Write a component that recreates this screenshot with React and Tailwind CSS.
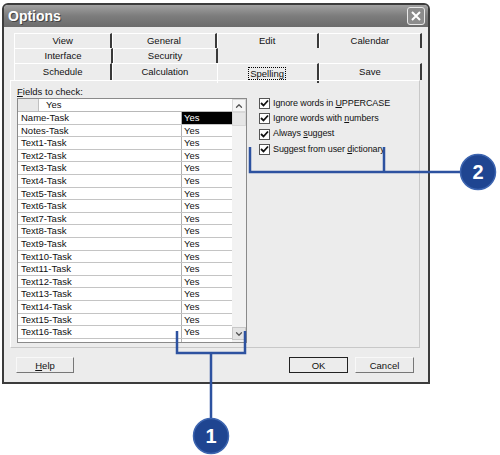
import { ChevronUp, ChevronDown } from 'lucide-react';

const rows = ['Name-Task', 'Notes-Task'].concat(
  Array.from({ length: 16 }, (_, i) => `Text${i + 1}-Task`)
);

const options = [
  { pre: 'Ignore words in ', key: 'U', post: 'PPERCASE' },
  { pre: 'Ignore words with ', key: 'n', post: 'umbers' },
  { pre: 'Always ', key: 's', post: 'uggest' },
  { pre: 'Suggest from user ', key: 'd', post: 'ictionary' },
];

function Tab({ label, w, last }) {
  return (
    <div
      className={`flex items-center justify-center border-t border-l border-t-white border-l-white ${
        last ? '' : 'border-r-2 border-r-[#3a3a3a]'
      } ${w}`}
    >
      {label}
    </div>
  );
}

function Check({ opt }) {
  return (
    <div className="flex h-[15.3px] items-center gap-[3px] whitespace-nowrap text-[9px] tracking-[-0.1px]">
      <div className="flex h-[11px] w-[11px] shrink-0 items-center justify-center border border-[#555] bg-white">
        <svg width="9" height="9" viewBox="0 0 9 9">
          <path d="M1 4 L3.5 6.5 L8 1.5" stroke="#111" strokeWidth="1.8" fill="none" />
        </svg>
      </div>
      <span>
        {opt.pre}
        <u>{opt.key}</u>
        {opt.post}
      </span>
    </div>
  );
}

export default function App() {
  return (
    <div className="relative h-[455px] w-[500px] overflow-hidden bg-white font-['Liberation_Sans',Arial,sans-serif] text-[9.5px] text-[#111]">
      <div className="pl-[2px] pt-[3px]">
        <div className="flex h-[381px] w-[428px] flex-col rounded-t-[6px] border-2 border-[#3c3c3c] bg-[#ececec]">
          {/* title bar */}
          <div className="flex h-[22px] items-center justify-between rounded-t-[4px] bg-gradient-to-b from-[#a2a2a2] via-[#7c7c7c] to-[#6c6c6c] pl-[4px] pr-[3px]">
            <span className="text-[14px] font-bold text-white [text-shadow:1px_1px_0_#444]">Options</span>
            <div className="flex h-[18px] w-[18px] items-center justify-center rounded-[3px] border border-[#e8e8e8] bg-[#8c8c8c]">
              <svg width="10" height="10" viewBox="0 0 10 10">
                <path d="M1 1 L9 9 M9 1 L1 9" stroke="white" strokeWidth="2" />
              </svg>
            </div>
          </div>

          {/* body */}
          <div className="flex flex-1 flex-col px-[6px] pt-[6px]">
            {/* tabs */}
            <div className="ml-[4px] flex flex-col">
              <div className="flex h-[15px]">
                <Tab label="View" w="w-[99px]" />
                <Tab label="General" w="w-[105px]" />
                <Tab label="Edit" w="w-[103px]" />
                <Tab label="Calendar" w="w-[104px]" />
              </div>
              <div className="flex h-[15px]">
                <Tab label="Interface" w="w-[99px]" />
                <Tab label="Security" w="w-[105px]" />
              </div>
              <div className="flex h-[17px]">
                <Tab label="Schedule" w="w-[99px]" />
                <Tab label="Calculation" w="w-[105px]" last />
                <div className="-mb-[3px] flex w-[103px] items-center justify-center border-t border-l border-t-white border-l-white border-r-2 border-r-[#3a3a3a] bg-[#ececec]">
                  <span className="border border-dotted border-black px-[1px] leading-[11px]">Spelling</span>
                </div>
                <Tab label="Save" w="w-[104px]" />
              </div>
            </div>

            {/* panel */}
            <div className="flex h-[268px] w-[410px] flex-col border-t border-l border-t-white border-l-white border-r border-r-[#c8c8c8] border-b border-b-[#c8c8c8] pl-[6px] pt-[5px]">
              <div className="h-[12px] leading-[12px]">
                <u>F</u>ields to check:
              </div>
              <div className="flex gap-[12px]">
                {/* grid */}
                <div className="flex h-[245px] w-[230px] border border-[#8a8a8a] bg-white">
                  <div className="flex w-[214px] flex-col overflow-hidden">
                    <div className="flex h-[13px] shrink-0 items-center border-b border-[#b8b8b8]">
                      <div className="h-full w-[21px] border-r border-[#c0c0c0] bg-[#e8e8e8]" />
                      <span className="pl-[7px]">Yes</span>
                    </div>
                    {rows.map((r, i) => (
                      <div key={r} className="flex h-[12.6px] shrink-0 border-b border-[#c4c4c4] leading-[11.5px]">
                        <div className="w-[164px] border-r border-[#b0b0b0] pl-[3px]">{r}</div>
                        <div className={`flex-1 pl-[2px] ${i === 0 ? 'bg-black text-white' : ''}`}>Yes</div>
                      </div>
                    ))}
                    <div className="flex h-[4px] shrink-0">
                      <div className="w-[164px] border-r border-[#b0b0b0]" />
                    </div>
                  </div>
                  {/* scrollbar */}
                  <div className="flex w-[14px] flex-col bg-[#f2f2f2]">
                    <div className="flex h-[13px] items-center justify-center border border-[#d8d8d8] bg-[#f6f6f6]">
                      <ChevronUp size={10} strokeWidth={3} className="text-[#555]" />
                    </div>
                    <div className="h-[14px] border border-[#d8d8d8] bg-[#e6e6e6]" />
                    <div className="flex-1" />
                    <div className="mb-[2px] flex h-[13px] items-center justify-center border border-[#c8c8c8] bg-[#e4e4e4]">
                      <ChevronDown size={10} strokeWidth={3} className="text-[#555]" />
                    </div>
                  </div>
                </div>

                {/* options */}
                <div className="-mt-[2px] flex flex-col">
                  {options.map((o) => (
                    <Check key={o.key} opt={o} />
                  ))}
                </div>
              </div>
            </div>

            {/* buttons */}
            <div className="mt-[9px] flex items-center pl-[6px] pr-[8px]">
              <button className="h-[16px] w-[58px] border border-[#f8f8f8] border-r-[#777] border-b-[#777] bg-[#ececec] text-[9.5px] leading-[13px]" type="button">
                <u>H</u>elp
              </button>
              <div className="flex-1" />
              <button className="h-[16px] w-[59px] border border-[#222] bg-[#ececec] text-[9.5px] leading-[13px]" type="button">
                OK
              </button>
              <button className="ml-[7px] h-[16px] w-[59px] border border-[#f8f8f8] border-r-[#777] border-b-[#777] bg-[#ececec] text-[9.5px] leading-[13px]" type="button">
                Cancel
              </button>
            </div>
          </div>
        </div>
      </div>

      {/* callouts */}
      <svg className="absolute left-0 top-0" width="500" height="455" viewBox="0 0 500 455">
        <g stroke="#2d52a0" strokeWidth="2.5" fill="none">
          <path d="M250 147 V172 H462 M384 147 V172" />
          <path d="M177 331 V353 H245 V331 M211 353 V420" />
        </g>
        <circle cx="478" cy="172" r="17.5" fill="#1f4591" stroke="#3d65b0" strokeWidth="1.5" />
        <circle cx="211" cy="436" r="17.5" fill="#1f4591" stroke="#3d65b0" strokeWidth="1.5" />
        <text x="478" y="179" textAnchor="middle" fill="white" fontSize="20" fontWeight="bold" fontFamily="Liberation Sans, Arial, sans-serif">2</text>
        <text x="211" y="443" textAnchor="middle" fill="white" fontSize="20" fontWeight="bold" fontFamily="Liberation Sans, Arial, sans-serif">1</text>
      </svg>
    </div>
  );
}
